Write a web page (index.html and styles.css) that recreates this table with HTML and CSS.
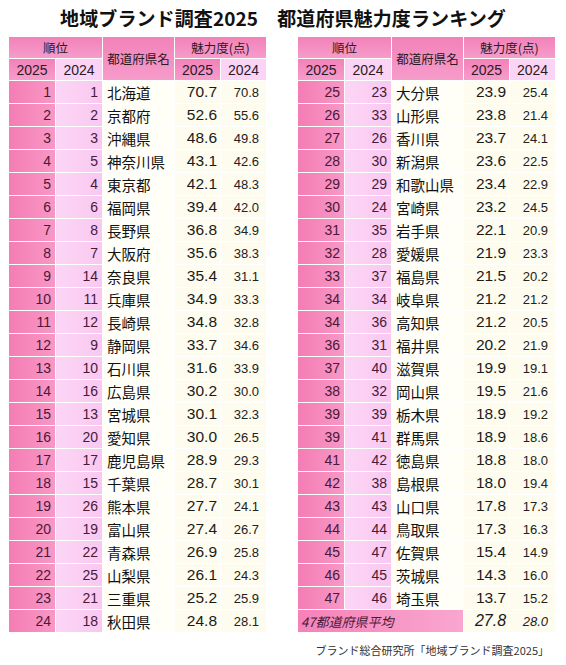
FILE: index.html
```html
<!DOCTYPE html>
<html lang="ja">
<head>
<meta charset="utf-8">
<link rel="stylesheet" href="styles.css">
</head>
<body>
<div class="page">
  <h1 class="title">地域ブランド調査2025　都道府県魅力度ランキング</h1>
  <div class="tables">
    <table class="rank">
      <colgroup><col class="c1"><col class="c2"><col class="c3"><col class="c4"><col class="c5"></colgroup>
      <thead>
        <tr class="h1"><th colspan="2" class="hp">順位</th><th rowspan="2" class="hp name-h">都道府県名</th><th colspan="2" class="hp">魅力度(点)</th></tr>
        <tr class="h2"><th class="hp">2025</th><th class="hl">2024</th><th class="hp">2025</th><th class="hl">2024</th></tr>
      </thead>
      <tbody id="left"></tbody>
    </table>
    <table class="rank">
      <colgroup><col class="c1"><col class="c2"><col class="c3"><col class="c4"><col class="c5"></colgroup>
      <thead>
        <tr class="h1"><th colspan="2" class="hp">順位</th><th rowspan="2" class="hp name-h">都道府県名</th><th colspan="2" class="hp">魅力度(点)</th></tr>
        <tr class="h2"><th class="hp">2025</th><th class="hl">2024</th><th class="hp">2025</th><th class="hl">2024</th></tr>
      </thead>
      <tbody id="right"></tbody>
    </table>
  </div>
  <p class="source">ブランド総合研究所「地域ブランド調査2025」</p>
</div>
<script src="script.js"></script>
</body>
</html>
```
FILE: styles.css
```css
html, body { margin: 0; padding: 0; background: #fff; }
.page {
  width: 566px;
  font-family: "Liberation Sans", "Noto Sans CJK JP", sans-serif;
  color: #111;
}
.title {
  margin: 0;
  height: 36px;
  line-height: 36px;
  padding-left: 0;
  text-align: center;
  font-size: 19px;
  font-weight: bold;
  letter-spacing: 0.1px;
  color: #111;
  font-family: "Noto Sans CJK JP", sans-serif;
}
.tables {
  display: flex;
  gap: 30px;
  padding-left: 8px;
}
.rank {
  border-collapse: separate;
  border-spacing: 1px;
  background: #fff;
  table-layout: fixed;
  width: 259px;
}
.c1 { width: 46px; }
.c2 { width: 46px; }
.c3 { width: 71px; }
.c4 { width: 45px; }
.c5 { width: 45px; }
.rank th, .rank td { padding: 0; overflow: hidden; white-space: nowrap; }
.rank th {
  height: 21px;
  font-weight: normal;
  color: #2a1a24;
  font-size: 14px;
  text-align: center;
}
.h1 th { font-size: 12.5px; font-family: "Noto Sans CJK JP", sans-serif; }
.name-h { font-size: 12.5px; font-family: "Noto Sans CJK JP", sans-serif; }
.hp { background: linear-gradient(#f282b9, #f69ccb); }
.hl { background: #fbd3f5; }
.rank td { height: 22px; }
.r25 {
  background: linear-gradient(90deg, #f47db4, #f898c6);
  text-align: right;
  padding-right: 4px !important;
  font-size: 14px;
  color: #4a1838;
}
.r24 {
  background: linear-gradient(90deg, #fcd6f6, #f9c8f1);
  text-align: right;
  padding-right: 4px !important;
  font-size: 14px;
  color: #4a1838;
}
.nm {
  background: #fffef7;
  padding-left: 4px !important;
  font-size: 14.5px;
  color: #111;
  font-family: "Noto Sans CJK JP", sans-serif;
}
.s25 {
  background: #fefcee;
  text-align: right;
  padding-right: 3px !important;
  font-size: 15.5px;
  color: #1a1a1a;
}
.s24 {
  background: #fefcee;
  text-align: right;
  padding-right: 7px !important;
  font-size: 13px;
  color: #222;
}
.avg {
  background: linear-gradient(90deg, #f582b8, #f9a6d0);
  font-style: italic;
  font-size: 13px;
  color: #4a1838;
  padding-left: 3px !important;
  font-family: "Noto Sans CJK JP", sans-serif;
}
.avg-s { font-style: italic; }
.avg-s.s25 { font-size: 16px; }
.source {
  margin: 9px 17px 0 0;
  text-align: right;
  font-size: 11px;
  color: #333;
  font-family: "Noto Sans CJK JP", sans-serif;
}
```
FILE: script.js
```js
var data = [
[1,1,"北海道","70.7","70.8"],[2,2,"京都府","52.6","55.6"],[3,3,"沖縄県","48.6","49.8"],[4,5,"神奈川県","43.1","42.6"],
[5,4,"東京都","42.1","48.3"],[6,6,"福岡県","39.4","42.0"],[7,8,"長野県","36.8","34.9"],[8,7,"大阪府","35.6","38.3"],
[9,14,"奈良県","35.4","31.1"],[10,11,"兵庫県","34.9","33.3"],[11,12,"長崎県","34.8","32.8"],[12,9,"静岡県","33.7","34.6"],
[13,10,"石川県","31.6","33.9"],[14,16,"広島県","30.2","30.0"],[15,13,"宮城県","30.1","32.3"],[16,20,"愛知県","30.0","26.5"],
[17,17,"鹿児島県","28.9","29.3"],[18,15,"千葉県","28.7","30.1"],[19,26,"熊本県","27.7","24.1"],[20,19,"富山県","27.4","26.7"],
[21,22,"青森県","26.9","25.8"],[22,25,"山梨県","26.1","24.3"],[23,21,"三重県","25.2","25.9"],[24,18,"秋田県","24.8","28.1"],
[25,23,"大分県","23.9","25.4"],[26,33,"山形県","23.8","21.4"],[27,26,"香川県","23.7","24.1"],[28,30,"新潟県","23.6","22.5"],
[29,29,"和歌山県","23.4","22.9"],[30,24,"宮崎県","23.2","24.5"],[31,35,"岩手県","22.1","20.9"],[32,28,"愛媛県","21.9","23.3"],
[33,37,"福島県","21.5","20.2"],[34,34,"岐阜県","21.2","21.2"],[34,36,"高知県","21.2","20.5"],[36,31,"福井県","20.2","21.9"],
[37,40,"滋賀県","19.9","19.1"],[38,32,"岡山県","19.5","21.6"],[39,39,"栃木県","18.9","19.2"],[39,41,"群馬県","18.9","18.6"],
[41,42,"徳島県","18.8","18.0"],[42,38,"島根県","18.0","19.4"],[43,43,"山口県","17.8","17.3"],[44,44,"鳥取県","17.3","16.3"],
[45,47,"佐賀県","15.4","14.9"],[46,45,"茨城県","14.3","16.0"],[47,46,"埼玉県","13.7","15.2"]
];
function row(d) {
  return '<tr><td class="r25">' + d[0] + '</td><td class="r24">' + d[1] + '</td><td class="nm">' + d[2] +
    '</td><td class="s25">' + d[3] + '</td><td class="s24">' + d[4] + '</td></tr>';
}
var l = '', r = '';
for (var i = 0; i < 24; i++) l += row(data[i]);
for (var j = 24; j < 47; j++) r += row(data[j]);
r += '<tr><td colspan="3" class="avg">47都道府県平均</td><td class="s25 avg-s">27.8</td><td class="s24 avg-s">28.0</td></tr>';
document.getElementById('left').innerHTML = l;
document.getElementById('right').innerHTML = r;
```
